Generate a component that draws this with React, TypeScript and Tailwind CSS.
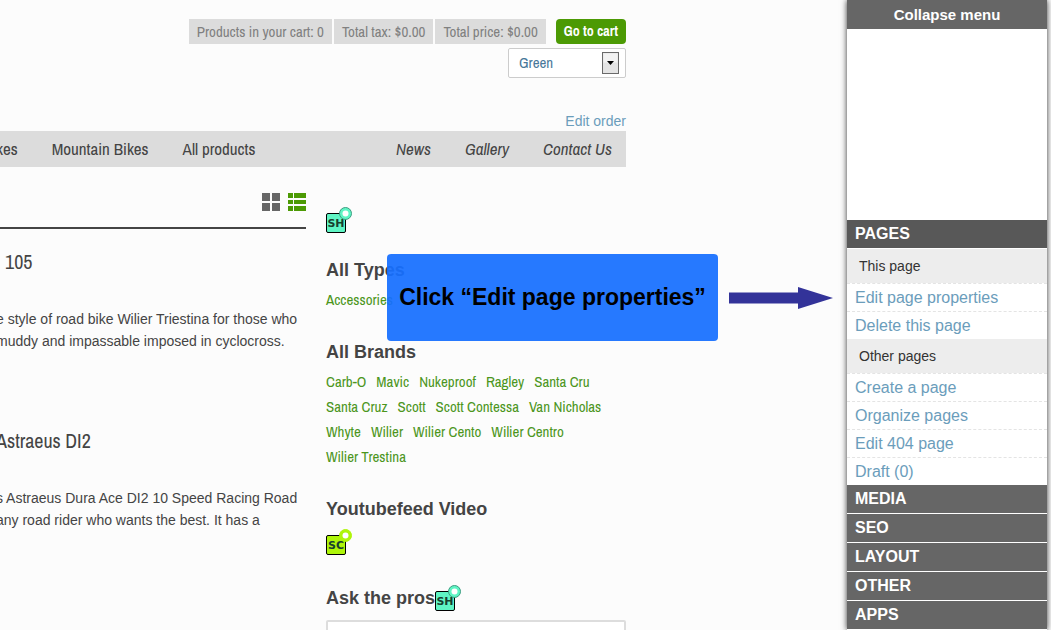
import { useState } from "react";

const brands = [
  "Carb-O",
  "Mavic",
  "Nukeproof",
  "Ragley",
  "Santa Cru",
  "Santa Cruz",
  "Scott",
  "Scott Contessa",
  "Van Nicholas",
  "Whyte",
  "Wilier",
  "Wilier Cento",
  "Wilier Centro",
  "Wilier Trestina",
];

const products = [
  {
    title: "\u00a0 105",
    lines: [
      "e style of road bike Wilier Triestina for those who",
      "muddy and impassable imposed in cyclocross.",
    ],
  },
  {
    title: "Astraeus DI2",
    lines: [
      "s Astraeus Dura Ace DI2 10 Speed Racing Road",
      "any road rider who wants the best. It has a",
    ],
  },
];

const menuGroups = [
  { title: "This page", links: ["Edit page properties", "Delete this page"] },
  {
    title: "Other pages",
    links: ["Create a page", "Organize pages", "Edit 404 page", "Draft (0)"],
  },
];

const sections = ["MEDIA", "SEO", "LAYOUT", "OTHER", "APPS"];

const narrow = "font-['Archivo_Narrow','Roboto_Condensed','Liberation_Sans_Narrow','Liberation_Sans',sans-serif]";

function Badge({ label, fill, ring }: { label: string; fill: string; ring: string }) {
  return (
    <svg width="26" height="27" viewBox="0 0 26 27" className="block shrink-0">
      <rect x="0.5" y="6.5" width="19" height="19" rx="1.5" fill={fill} stroke="#000" />
      <text
        x="10"
        y="20"
        textAnchor="middle"
        fontSize="11"
        fontWeight="bold"
        fontFamily="DejaVu Sans, sans-serif"
        fill="#17402f"
      >
        {label}
      </text>
      <circle cx="19.5" cy="6.5" r="6" fill={fill} stroke={ring} />
      <circle cx="19.5" cy="6.5" r="3" fill="#fff" />
    </svg>
  );
}

function TagList({ items }: { items: string[] }) {
  return (
    <ul className={`mt-[3px] -mb-px flex flex-wrap gap-x-[10px] pr-5 text-[15px] leading-[25px] text-[#4c961c] ${narrow}`}>
      {items.map((item) => (
        <li key={item}>
          <a href="#">{item}</a>
        </li>
      ))}
    </ul>
  );
}

function Header() {
  const [color, setColor] = useState("Green");

  return (
    <header className="flex flex-col items-end pt-[19px]">
      <div className={`flex gap-0.5 text-[15px] leading-[25px] text-[#808080] ${narrow}`}>
        <span className="bg-[#dcdcdc] px-2">Products in your cart: 0</span>
        <span className="bg-[#dcdcdc] px-2">Total tax: $0.00</span>
        <span className="bg-[#dcdcdc] px-2">Total price: $0.00</span>
        <button className="ml-2 rounded bg-[#4c9a04] px-2 text-sm leading-[25px] font-bold text-white">
          Go to cart
        </button>
      </div>
      <div className="relative mt-1">
        <select
          aria-label="Color"
          value={color}
          onChange={(e) => setColor(e.target.value)}
          className={`block h-[30px] w-[118px] appearance-none rounded-xs border border-[#ccc] bg-white pl-[10px] text-[15px] text-[#49789a] ${narrow}`}
        >
          <option>Green</option>
          <option>Blue</option>
          <option>Red</option>
        </select>
        <svg
          width="17"
          height="22"
          viewBox="0 0 17 22"
          className="pointer-events-none absolute top-1 right-[7px]"
        >
          <rect x="0.5" y="0.5" width="16" height="21" fill="#e4e4e4" stroke="#6a6a6a" />
          <rect x="1.5" y="1.5" width="14" height="9" fill="#f3f3f3" />
          <path d="M5 9h7l-3.500 4z" fill="#000" />
        </svg>
      </div>
      <a href="#" className="mt-[33px] text-sm leading-5 text-[#6b9dbb]">
        Edit order
      </a>
    </header>
  );
}

function Products() {
  return (
    <section className="min-w-0 flex-1">
      <div className="flex justify-end gap-2 border-b-2 border-[#444] pt-[26px] pb-4">
        <button aria-label="Grid view">
          <svg width="18" height="18" viewBox="0 0 18 18" fill="#666" className="block">
            <path d="M0 0h8v8H0zM10 0h8v8h-8zM0 10h8v8H0zM10 10h8v8h-8z" />
          </svg>
        </button>
        <button aria-label="List view">
          <svg width="18" height="18" viewBox="0 0 18 18" fill="#4c9a04" className="block">
            <path d="M0 0h5v5H0zM6 0h12v5H6zM0 7h5v4H0zM6 7h12v4H6zM0 13h5v5H0zM6 13h12v5H6z" />
          </svg>
        </button>
      </div>
      <div className="-ml-1 flex flex-col gap-[75px] whitespace-nowrap pt-[19px]">
        {products.map((product) => (
          <article key={product.title}>
            <h2 className={`text-xl leading-7 text-[#444] ${narrow}`}>{product.title}</h2>
            <p className="mt-8 text-sm leading-[22px] text-[#444]">
              {product.lines[0]}
              <br />
              {product.lines[1]}
            </p>
          </article>
        ))}
      </div>
    </section>
  );
}

function Filters() {
  const heading = "text-lg leading-7 font-bold text-[#444]";

  return (
    <section className="w-[300px] shrink-0 pt-10">
      <Badge label="SH" fill="#5ff5c4" ring="#3d9c80" />
      <h3 className={`mt-[22px] ${heading}`}>All Types</h3>
      <TagList items={["Accessories"]} />
      <h3 className={`mt-[27px] ${heading}`}>All Brands</h3>
      <TagList items={brands} />
      <h3 className={`mt-[27px] mb-1.5 ${heading}`}>Youtubefeed Video</h3>
      <Badge label="SC" fill="#aef50a" ring="#aef50a" />
      <div className="mt-7 flex items-end">
        <label htmlFor="question" className={heading}>
          Ask the pros
        </label>
        <Badge label="SH" fill="#5ff5c4" ring="#3d9c80" />
      </div>
      <textarea
        id="question"
        className="mt-2 block h-24 w-full resize-none rounded-xs border-2 border-[#ddd] bg-white"
      />
    </section>
  );
}

function AdminMenu() {
  const bar = "block w-full px-2 text-left text-base leading-7 font-bold text-white";

  return (
    <aside className="relative z-10 mr-1 w-[200px] shrink-0 bg-white shadow-[0_0_6px_#333]">
      <button className="block w-full bg-[#666] text-center text-[15px] leading-[29px] font-bold text-white">
        Collapse menu
      </button>
      <div className="h-[191px]" />
      <button className={`mb-px bg-[#585858] ${bar}`}>PAGES</button>
      {menuGroups.map((group) => (
        <div key={group.title}>
          <h4 className="bg-[#ededed] px-3 text-sm leading-[34px] text-[#333]">{group.title}</h4>
          <ul className="text-base leading-[27px] text-[#6b9dbb]">
            {group.links.map((link) => (
              <li key={link} className="border-t border-dashed border-[#e4e4e4] px-2">
                <a href="#">{link}</a>
              </li>
            ))}
          </ul>
        </div>
      ))}
      {sections.map((name) => (
        <button key={name} className={`mb-px bg-[#666] ${bar}`}>
          {name}
        </button>
      ))}
    </aside>
  );
}

export default function App() {
  return (
    <div className="flex h-screen overflow-hidden bg-[#fcfcfc] font-['Liberation_Sans',Arial,sans-serif]">
      <main className="relative min-w-0 flex-1 overflow-hidden pr-[221px]">
        <Header />
        <nav
          className={`flex items-center justify-between bg-[#dcdcdc] pr-[14px] text-[17px] leading-9 text-[#444] ${narrow}`}
        >
          <div className="-ml-1 flex gap-[34px]">
            <a href="#">kes</a>
            <a href="#">Mountain Bikes</a>
            <a href="#">All products</a>
          </div>
          <div className="flex gap-[34px] italic">
            <a href="#">News</a>
            <a href="#">Gallery</a>
            <a href="#">Contact Us</a>
          </div>
        </nav>
        <div className="flex gap-5">
          <Products />
          <Filters />
        </div>

        <div className="absolute top-[254px] left-[387px] flex items-center gap-[11px]">
          <p className="w-[331px] rounded bg-[#156fff]/93 text-center text-[23px] leading-[87px] font-bold whitespace-nowrap text-black">
            Click “Edit page properties”
          </p>
          <svg width="104" height="22" viewBox="0 0 104 22" className="block">
            <path d="M0 5.500h69V0l35 11-35 11v-5.500H0z" fill="#333399" />
          </svg>
        </div>
      </main>
      <AdminMenu />
    </div>
  );
}
